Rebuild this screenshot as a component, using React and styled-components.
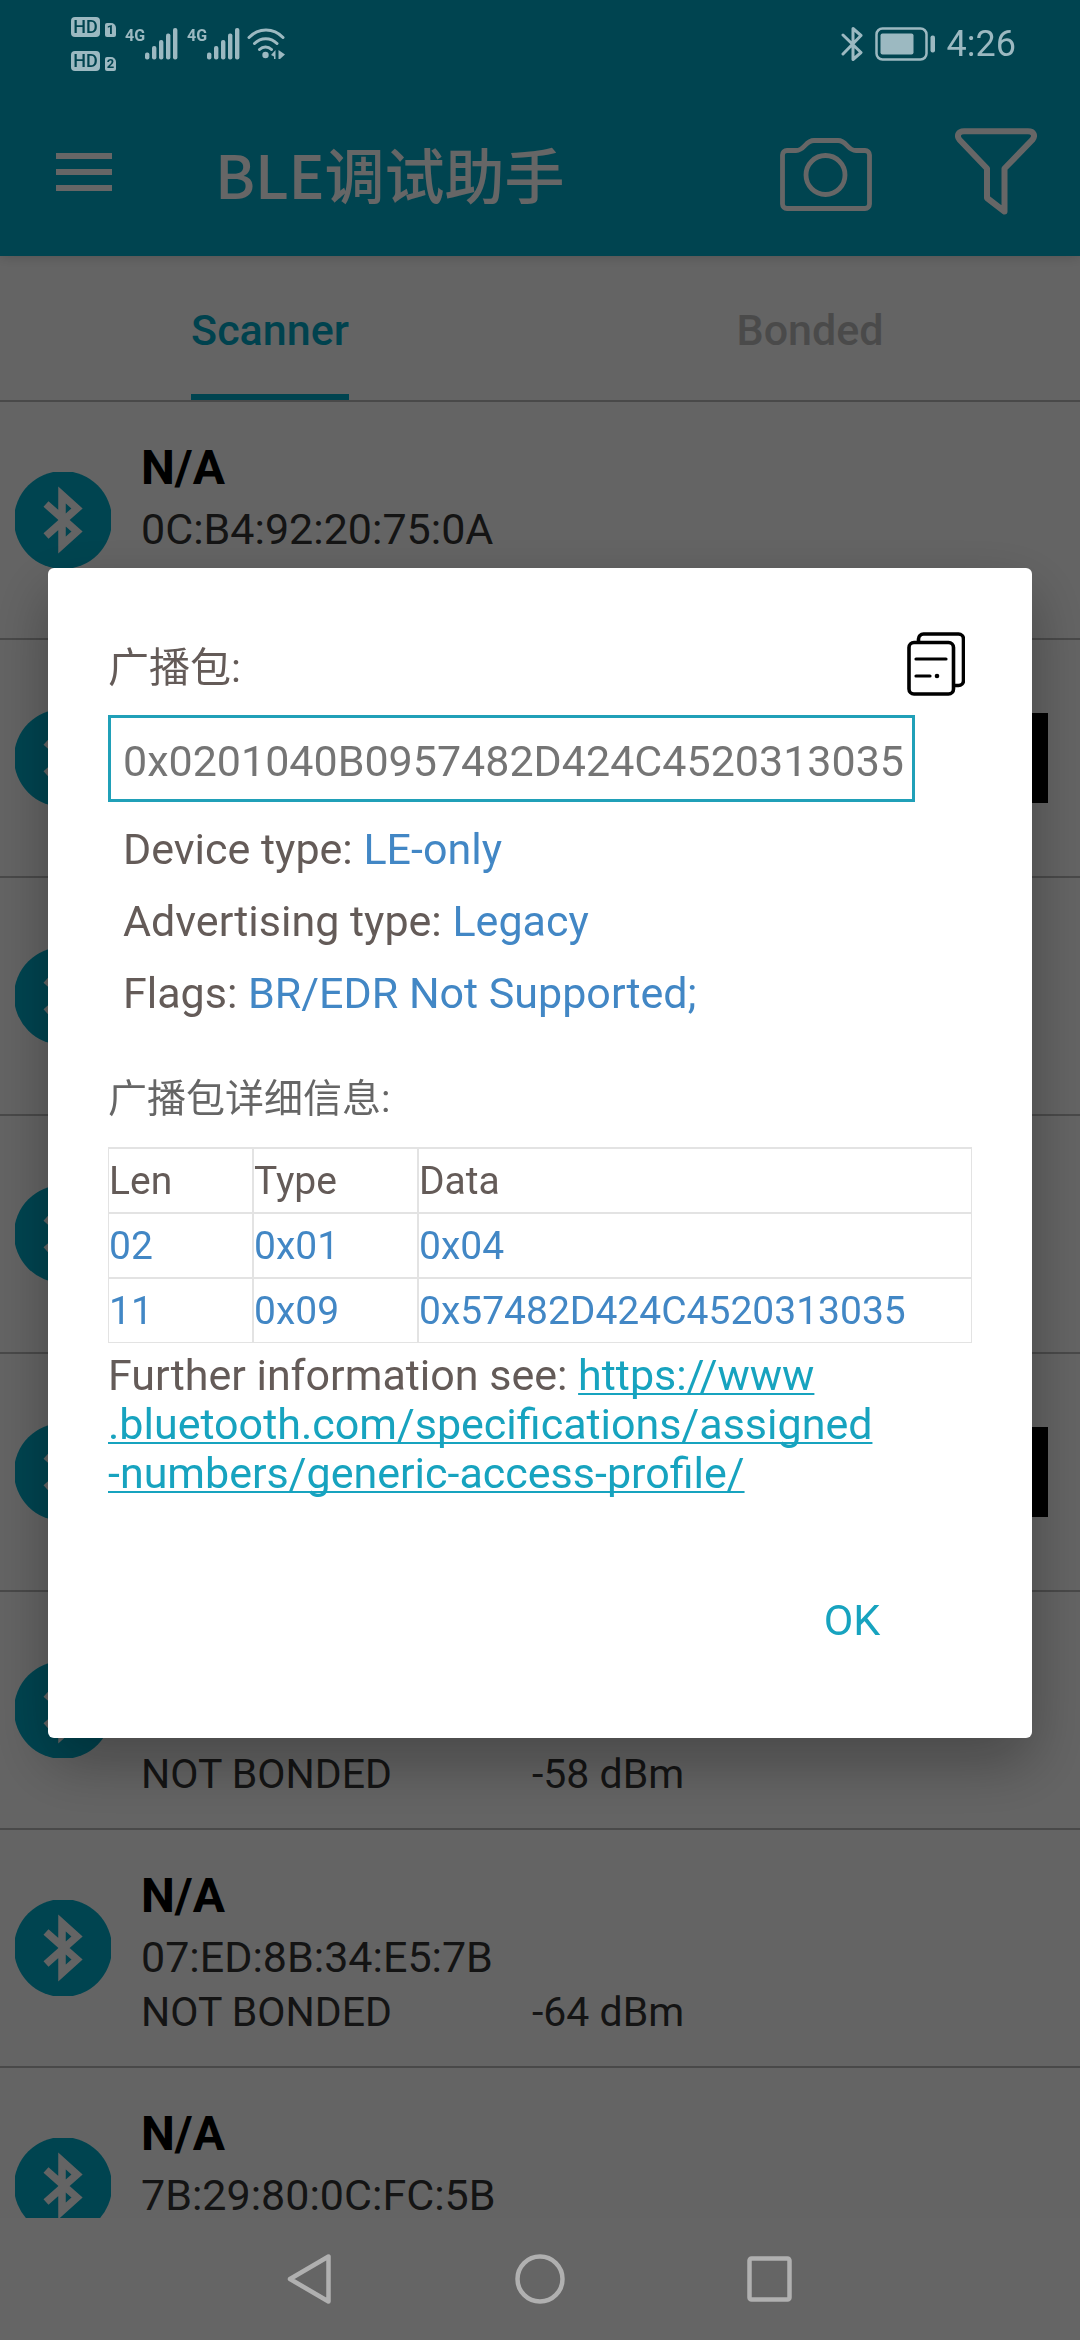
import React from 'react'
import styled, { createGlobalStyle } from 'styled-components'

const devices = [
  { name: 'N/A', address: '0C:B4:92:20:75:0A' },
  { connectable: true },
  {},
  {},
  { connectable: true },
  { status: 'NOT BONDED', rssi: '-58 dBm' },
  { name: 'N/A', address: '07:ED:8B:34:E5:7B', status: 'NOT BONDED', rssi: '-64 dBm' },
  { name: 'N/A', address: '7B:29:80:0C:FC:5B' },
]

const records = [
  { len: '02', type: '0x01', data: '0x04' },
  { len: '11', type: '0x09', data: '0x57482D424C4520313035' },
]

function Signal() {
  return (
    <Network>
      <span>4G</span>
      <svg width="33" height="32" viewBox="0 0 33 32" fill="currentColor">
        <rect x="0" y="24.5" width="4.4" height="7" rx="2" />
        <rect x="7" y="18" width="4.4" height="13.5" rx="2" />
        <rect x="14" y="12" width="4.4" height="19.5" rx="2" />
        <rect x="21" y="5.5" width="4.4" height="26" rx="2" />
        <rect x="28" y="0" width="4.4" height="31.5" rx="2" />
      </svg>
    </Network>
  )
}

function Status() {
  return (
    <StatusBar>
      <SimList>
        <Sim><Hd>HD</Hd><SimNo>1</SimNo></Sim>
        <Sim><Hd>HD</Hd><SimNo>2</SimNo></Sim>
      </SimList>
      <Signal />
      <Signal />
      <WifiIcon viewBox="0 0 38 32" fill="none" stroke="currentColor" strokeWidth="3" strokeLinecap="round">
        <path d="M2 9.5C11.5-0.5 26.5-0.5 36 9.5M7.5 15.5C14 9 23.5 9 30 15.5M12.5 21.5C16 18 21 18 24.5 21.5" />
        <circle cx="18.5" cy="27" r="3.2" fill="currentColor" stroke="none" />
        <path d="M28.5 22v9h-1.5v-2.5l-3-1.5zM31.5 22l6.5 4.5-5 4.5h-1.5z" fill="currentColor" stroke="none" />
      </WifiIcon>
      <StatusRight>
        <svg width="22" height="34" viewBox="0 0 22 34" fill="none" stroke="currentColor" strokeWidth="3" strokeLinecap="round" strokeLinejoin="round">
          <path d="M2 8L20 25.5L12 32.5V1.5L20 8.5L2 27" />
        </svg>
        <svg width="60" height="34" viewBox="0 0 60 34" fill="none">
          <rect x="1.5" y="1.5" width="50" height="31" rx="6" stroke="currentColor" strokeWidth="2.5" />
          <rect x="5.5" y="6.5" width="33" height="21" rx="2" fill="currentColor" />
          <rect x="55.5" y="8.5" width="4.5" height="17" rx="2" fill="currentColor" />
        </svg>
        <time>4:26</time>
      </StatusRight>
    </StatusBar>
  )
}

function Device({ name, address, status, rssi, connectable }) {
  return (
    <Row>
      <DeviceIcon viewBox="0 0 96 96">
        <circle cx="48" cy="48" r="49" fill="#00aac8" />
        <path d="M31 32L62 59.500L47 73V23L62 36.500L31 64" fill="none" stroke="#fafafa" strokeWidth="7.500" />
      </DeviceIcon>
      <Info>
        <Name>{name}</Name>
        <Address>{address}</Address>
        <Bond>
          <span>{status}</span>
          <span>{rssi}</span>
        </Bond>
      </Info>
      {connectable && <Connect aria-label="Connect" />}
    </Row>
  )
}

function PacketDialog() {
  return (
    <Scrim>
      <Dialog role="dialog">
        <DialogTop>
          <label htmlFor="packet">广播包:</label>
          <IconButton aria-label="Copy">
            <svg width="58" height="64" viewBox="0 0 58 64" fill="none" stroke="#000" strokeWidth="3.6" strokeLinecap="round">
              <path d="M11.5 9V7a5 5 0 0 1 5-5h35a5 5 0 0 1 5 5v41.5a5 5 0 0 1-5 5H48" />
              <rect x="2" y="10.5" width="44.5" height="51.5" rx="5" />
              <path d="M9 27h30M9 44h14" strokeWidth="3.2" />
              <circle cx="30" cy="44" r="2.3" fill="#000" stroke="none" />
            </svg>
          </IconButton>
        </DialogTop>
        <Packet id="packet" readOnly value="0x0201040B0957482D424C4520313035" />
        <Facts>
          <li>Device type: <b>LE-only</b></li>
          <li>Advertising type: <b>Legacy</b></li>
          <li>Flags: <b>BR/EDR Not Supported;</b></li>
        </Facts>
        <Heading>广播包详细信息:</Heading>
        <Table>
          <thead>
            <tr><th>Len</th><th>Type</th><th>Data</th></tr>
          </thead>
          <tbody>
            {records.map(r => (
              <tr key={r.len}><td>{r.len}</td><td>{r.type}</td><td>{r.data}</td></tr>
            ))}
          </tbody>
        </Table>
        <More>
          Further information see:{' '}
          <a href="https://www.bluetooth.com/specifications/assigned-numbers/generic-access-profile/">
            https://www<wbr />.bluetooth.com/specifications/assigned<wbr /><NoWrap>-numbers/generic-access-profile/</NoWrap>
          </a>
        </More>
        <Actions>
          <OkButton>OK</OkButton>
        </Actions>
      </Dialog>
    </Scrim>
  )
}

function App() {
  return (
    <Screen>
      <GlobalStyle />
      <Header>
        <Status />
        <Toolbar>
          <IconButton aria-label="Menu">
            <svg width="56" height="38" viewBox="0 0 56 38" fill="#fff">
              <path d="M0 0h56v6H0zM0 16h56v6H0zM0 32h56v6H0z" />
            </svg>
          </IconButton>
          <Title>BLE调试助手</Title>
          <IconButton aria-label="Camera">
            <svg width="92" height="80" viewBox="0 -6 92 80" fill="none" stroke="#fff" strokeWidth="4.8">
              <path d="M16 12.5H7a4.5 4.5 0 0 0-4.5 4.5V66a4.5 4.5 0 0 0 4.5 4.5h78a4.5 4.5 0 0 0 4.5-4.5V17a4.5 4.5 0 0 0-4.5-4.5h-9c-9 0-9-10-18-10H34c-9 0-9 10-18 10z" />
              <circle cx="45.5" cy="37" r="19.5" />
            </svg>
          </IconButton>
          <IconButton aria-label="Filter">
            <svg width="82" height="88" viewBox="0 0 82 88" fill="none" stroke="#fff" strokeWidth="6" strokeLinejoin="round">
              <path d="M9 3.2h64c6 0 7.5 4.5 4.5 8.5L49.5 40.5V83.5L32 70V40.5L4.5 11.7C1.5 8 3 3.2 9 3.2z" />
            </svg>
          </IconButton>
        </Toolbar>
      </Header>
      <Tabs>
        <Tab $active><span>Scanner</span></Tab>
        <Tab><span>Bonded</span></Tab>
      </Tabs>
      <List>
        {devices.map((d, i) => <Device key={i} {...d} />)}
      </List>
      <PacketDialog />
      <NavBar>
        <IconButton aria-label="Back">
          <svg width="50" height="50" viewBox="0 0 50 50" fill="none" stroke="currentColor" strokeWidth="4.5" strokeLinejoin="round">
            <path d="M43.5 2.5V47.5L5 25z" />
          </svg>
        </IconButton>
        <IconButton aria-label="Home">
          <svg width="50" height="50" viewBox="0 0 50 50" fill="none" stroke="currentColor" strokeWidth="4.5">
            <circle cx="25" cy="25" r="22.5" />
          </svg>
        </IconButton>
        <IconButton aria-label="Recent apps">
          <svg width="50" height="50" viewBox="0 0 50 50" fill="none" stroke="currentColor" strokeWidth="4.5">
            <rect x="4.5" y="4.5" width="40" height="41" rx="2" />
          </svg>
        </IconButton>
      </NavBar>
    </Screen>
  )
}

export default App

const GlobalStyle = createGlobalStyle`
  * {
    box-sizing: border-box;
  }
  body {
    margin: 0;
    background: #fafafa;
    font-family: Roboto, "Noto Sans CJK SC", sans-serif;
    font-size: 43px;
  }
  button, input {
    font: inherit;
  }
  svg {
    display: block;
  }
`

const Screen = styled.div`
  height: 100vh;
  display: flex;
  flex-direction: column;
  overflow: hidden;
`

const Header = styled.header`
  flex: none;
  background: #00aac8;
  box-shadow: 0 0 12px rgba(0, 0, 0, 0.2);
`

// sits above the scrim, the system draws it undimmed
const StatusBar = styled.div`
  position: relative;
  z-index: 3;
  height: 88px;
  padding: 0 64px 0 71px;
  display: flex;
  align-items: center;
  color: #9cb9c1;
`

const SimList = styled.div`
  display: grid;
  gap: 14px;
`

const Sim = styled.div`
  display: flex;
  align-items: flex-end;
  gap: 5px;
  height: 20px;
`

const Hd = styled.span`
  width: 29px;
  height: 20px;
  border-radius: 4px;
  background: #9cb9c1;
  color: #004450;
  font-size: 18px;
  font-weight: 500;
  line-height: 20px;
  text-align: center;
`

const SimNo = styled.span`
  width: 11px;
  height: 14px;
  border-radius: 2px 5px 2px 2px;
  background: #9cb9c1;
  color: #004450;
  font-size: 13px;
  font-weight: 700;
  line-height: 14px;
  text-align: center;
`

const Network = styled.div`
  display: flex;
  align-items: flex-start;
  margin-left: 9px;
  font-size: 16px;
  font-weight: 700;
  line-height: 16px;
`

const WifiIcon = styled.svg`
  width: 38px;
  height: 32px;
  margin-left: 7px;
`

const StatusRight = styled.div`
  display: flex;
  align-items: center;
  gap: 12px;
  margin-left: auto;
  font-size: 36px;
`

const Toolbar = styled.div`
  height: 168px;
  padding: 0 43px 0 56px;
  display: flex;
  align-items: center;
  gap: 83px;
`

const IconButton = styled.button`
  padding: 0;
  border: 0;
  background: none;
  color: inherit;
`

const Title = styled.h1`
  flex: 1;
  margin: 0;
  padding-left: 20px;
  color: #fff;
  font-family: "Noto Sans CJK SC", sans-serif;
  font-size: 60px;
  font-weight: 500;
`

const Tabs = styled.nav`
  flex: none;
  display: flex;
  border-bottom: 2px solid #b7b7b7;
`

const Tab = styled.button`
  flex: 1;
  display: flex;
  justify-content: center;
  padding: 0;
  border: 0;
  background: none;
  color: ${props => props.$active ? '#00a6c4' : '#b9b9b9'};
  font-weight: 500;

  span {
    height: 144px;
    padding-top: 10px;
    line-height: 128px;
    border-bottom: 6px solid ${props => props.$active ? '#00aac8' : 'transparent'};
  }
`

const List = styled.ul`
  flex: 1;
  min-height: 0;
  margin: 0;
  padding: 0;
  list-style: none;
  overflow: hidden;
`

const Row = styled.li`
  height: 238px;
  padding: 0 32px 0 15px;
  display: flex;
  align-items: center;
  gap: 30px;
  border-bottom: 2px solid #b7b7b7;
`

const DeviceIcon = styled.svg`
  flex: none;
  width: 96px;
  height: 96px;
`

const Info = styled.div`
  flex: 1;
  align-self: flex-start;
  padding-top: 34px;
  color: #333;
`

const Name = styled.div`
  height: 64px;
  color: #000;
  font-size: 48px;
  font-weight: 700;
  line-height: 64px;
`

const Address = styled.div`
  height: 58px;
  line-height: 58px;
`

const Bond = styled.div`
  display: grid;
  grid-template-columns: 391px 1fr;
  font-size: 41px;
  line-height: 52px;
`

const Connect = styled.button`
  width: 240px;
  height: 90px;
  border: 0;
  background: #000;
`

const NavBar = styled.nav`
  position: relative;
  z-index: 3;
  flex: none;
  height: 122px;
  display: flex;
  align-items: center;
  justify-content: center;
  gap: 180px;
  background: #656565;
  color: #b0b0b0;
`

const Scrim = styled.div`
  position: fixed;
  inset: 0;
  z-index: 2;
  padding: 88px 48px 122px;
  display: flex;
  align-items: center;
  background: rgba(0, 0, 0, 0.6);
`

const Dialog = styled.div`
  flex: 1;
  padding: 60px 60px 70px;
  border-radius: 6px;
  background: #fff;
  color: #645b58;
  box-shadow: 0 24px 60px rgba(0, 0, 0, 0.3);
`

const DialogTop = styled.div`
  height: 72px;
  padding-right: 7px;
  display: flex;
  align-items: center;
  justify-content: space-between;
  font-size: 41px;
`

const Packet = styled.input`
  display: block;
  width: calc(100% - 57px);
  height: 87px;
  margin-top: 15px;
  padding: 4px 8px 0 12px;
  border: 3px solid #20a0b8;
  border-radius: 0;
  outline: 0;
  background: none;
  color: #757575;
`

const Facts = styled.ul`
  margin: 11px 0 0;
  padding: 0 0 0 15px;
  list-style: none;
  line-height: 72px;

  b {
    color: #4287c5;
    font-weight: 400;
  }
`

const Heading = styled.h2`
  margin: 34px 0 12px;
  color: #666;
  font-size: 39px;
  font-weight: 400;
  line-height: 72px;
`

const Table = styled.table`
  width: 100%;
  table-layout: fixed;
  border-collapse: separate;
  border-spacing: 0;
  border: 1px solid #e3e3e3;
  border-top-width: 2px;
  font-size: 39px;

  th, td {
    height: 65px;
    padding: 0;
    border: 0 solid #e3e3e3;
    border-width: 0 2px 2px 0;
    font-weight: 400;
    text-align: left;
  }
  th:first-child {
    width: 145px;
  }
  th:nth-child(2) {
    width: 165px;
  }
  th:last-child, td:last-child {
    border-right-width: 0;
  }
  tr:last-child td {
    height: 63px;
    border-bottom-width: 0;
  }
  thead th {
    border-bottom-width: 2px;
  }
  td {
    color: #4287c5;
  }
`

const More = styled.p`
  margin: 8px 0 0;
  line-height: 49px;

  a {
    color: #17a3bf;
    text-decoration-thickness: 2px;
    text-decoration-skip-ink: none;
    text-underline-offset: 3px;
  }
`

const NoWrap = styled.span`
  white-space: nowrap;
`

const Actions = styled.div`
  display: flex;
  justify-content: flex-end;
  margin-top: 74px;
`

const OkButton = styled.button`
  width: 240px;
  height: 96px;
  padding: 0;
  border: 0;
  background: none;
  color: #17a3bf;
`
